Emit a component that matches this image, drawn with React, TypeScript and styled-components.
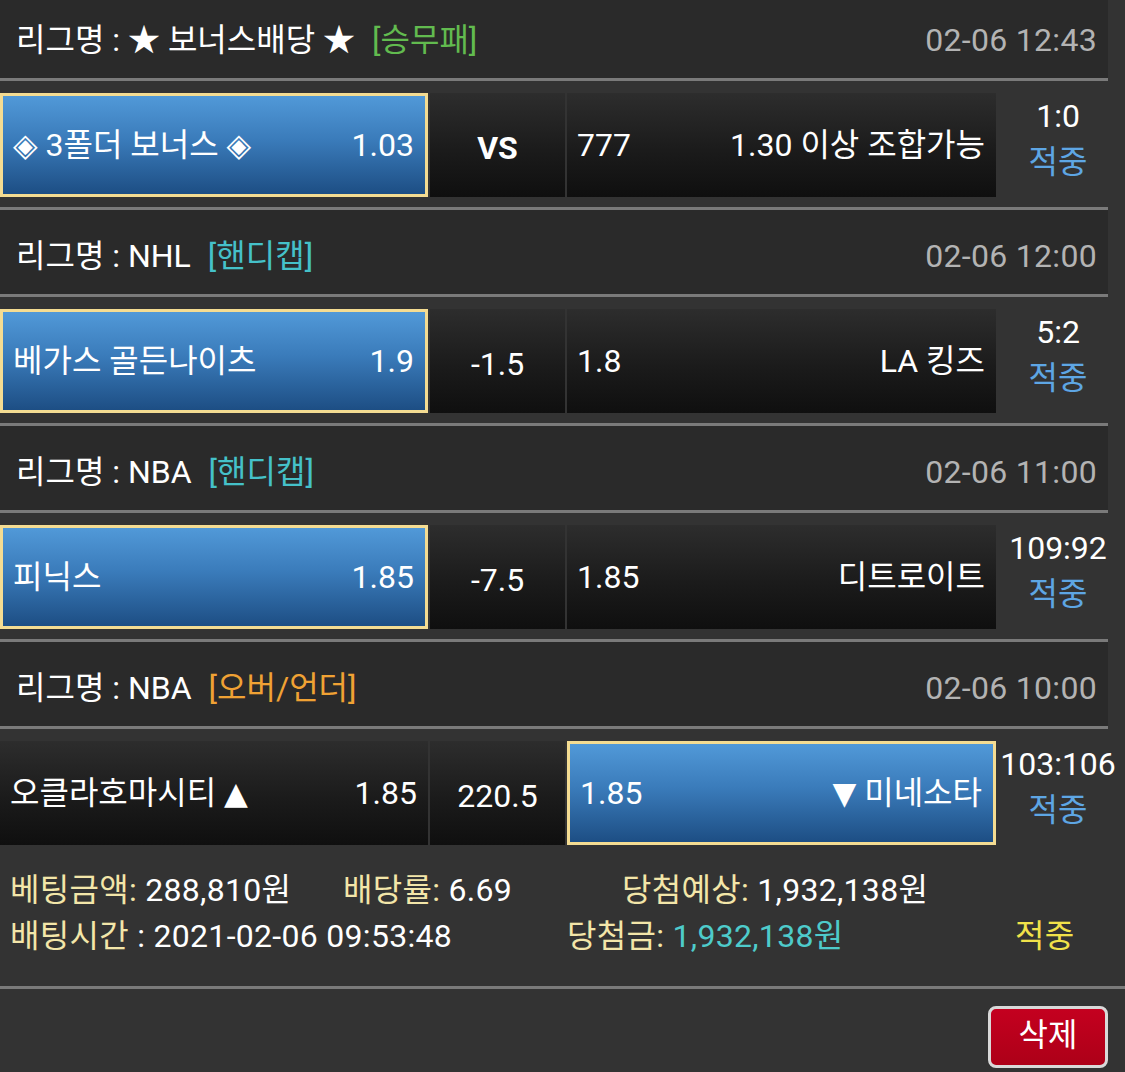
import React from "react";
import styled, { createGlobalStyle } from "styled-components";

const GlobalStyle = createGlobalStyle`
  * { box-sizing: border-box; }
  html, body {
    margin: 0;
    padding: 0;
    background: #333333;
  }
  body {
    font-family: Roboto, "Noto Sans CJK KR", "DejaVu Sans", sans-serif;
    color: #ffffff;
    font-size: 32px;
    overflow: hidden;
  }
`;

const Wrapper = styled.div`
  width: 1125px;
  margin-top: -9px;
`;

const LeagueHeader = styled.div`
  width: 1108px;
  height: 90px;
  padding: 8px 11px 0 16px;
  display: flex;
  align-items: center;
  justify-content: space-between;
  background: #2a2a2a;
  border-top: 3px solid #7a7a7a;
  border-bottom: 3px solid #7a7a7a;
  line-height: 40px;
`;

const LeagueName = styled.div`
  display: flex;
  align-items: center;
  white-space: nowrap;
`;

const Tag = styled.span<{ $color: string }>`
  margin-left: 17px;
  color: ${(p) => p.$color};
`;

const DateText = styled.span`
  color: #b3b3b3;
  letter-spacing: 0.3px;
`;

const MatchRow = styled.div`
  height: 126px;
  padding: 12px 0 10px;
  display: flex;
  gap: 2px;
`;

const Cell = styled.div<{ $selected?: boolean; $width: number }>`
  width: ${(p) => p.$width}px;
  flex-shrink: 0;
  height: 104px;
  padding: 0 11px 0 10px;
  display: flex;
  align-items: center;
  justify-content: space-between;
  white-space: nowrap;
  line-height: 40px;
  border: ${(p) => (p.$selected ? "3px solid #f4dc92" : "none")};
  background: ${(p) =>
    p.$selected
      ? "linear-gradient(to bottom, #5199d8 0%, #3a7bba 45%, #1d4e84 100%)"
      : "linear-gradient(to bottom, #2d2d2d 0%, #1b1b1b 55%, #0f0f0f 100%)"};
`;

const MidCell = styled(Cell)`
  justify-content: center;
  padding: 6px 0 0;
`;

const VsText = styled.span<{ $bold?: boolean }>`
  font-weight: ${(p) => (p.$bold ? 700 : 400)};
`;

const Arrow = styled.span`
  font-family: "DejaVu Sans", sans-serif;
  font-size: 31px;
`;

const ScoreCol = styled.div`
  width: 124px;
  flex-shrink: 0;
  margin-left: -2px;
  display: flex;
  flex-direction: column;
  align-items: center;
  line-height: 46px;
  white-space: nowrap;
`;

const Hit = styled.span`
  color: #5ea6e4;
`;

const Footer = styled.div`
  height: 134px;
  padding: 12px 0 0 10px;
  border-bottom: 3px solid #7a7a7a;
  line-height: 46px;
`;

const FooterLine = styled.div`
  display: flex;
  white-space: nowrap;
  letter-spacing: 0.3px;
`;

const FooterItem = styled.div<{ $width?: number }>`
  width: ${(p) => (p.$width ? `${p.$width}px` : "auto")};
  flex-shrink: 0;
`;

const Label = styled.span`
  color: #f3e6a9;
`;

const Money = styled.span`
  color: #4ecbcb;
`;

const Result = styled.span`
  color: #f1e24a;
`;

const ButtonBar = styled.div`
  display: flex;
  justify-content: flex-end;
  padding: 17px 17px 0 0;
`;

const DeleteButton = styled.button`
  width: 120px;
  height: 62px;
  border: 3px solid #d9d9d9;
  border-radius: 8px;
  background: linear-gradient(to bottom, #c4001f 0%, #ad0018 100%);
  color: #ffffff;
  font-family: inherit;
  font-size: 32px;
  line-height: 40px;
  padding: 0 0 4px;
`;

type Match = {
  league: string;
  type: string;
  typeColor: string;
  date: string;
  home: React.ReactNode;
  homeOdds: string;
  mid: string;
  awayOdds: string;
  away: React.ReactNode;
  score: string;
  pick: "home" | "away";
};

const matches: Match[] = [
  {
    league: "리그명 : ★ 보너스배당 ★",
    type: "[승무패]",
    typeColor: "#62bb4f",
    date: "02-06 12:43",
    home: "◈ 3폴더 보너스 ◈",
    homeOdds: "1.03",
    mid: "VS",
    awayOdds: "777",
    away: "1.30 이상 조합가능",
    score: "1:0",
    pick: "home",
  },
  {
    league: "리그명 : NHL",
    type: "[핸디캡]",
    typeColor: "#45c1c9",
    date: "02-06 12:00",
    home: "베가스 골든나이츠",
    homeOdds: "1.9",
    mid: "-1.5",
    awayOdds: "1.8",
    away: "LA 킹즈",
    score: "5:2",
    pick: "home",
  },
  {
    league: "리그명 : NBA",
    type: "[핸디캡]",
    typeColor: "#45c1c9",
    date: "02-06 11:00",
    home: "피닉스",
    homeOdds: "1.85",
    mid: "-7.5",
    awayOdds: "1.85",
    away: "디트로이트",
    score: "109:92",
    pick: "home",
  },
  {
    league: "리그명 : NBA",
    type: "[오버/언더]",
    typeColor: "#f0a234",
    date: "02-06 10:00",
    home: (
      <>
        오클라호마시티 <Arrow>▲</Arrow>
      </>
    ),
    homeOdds: "1.85",
    mid: "220.5",
    awayOdds: "1.85",
    away: (
      <>
        <Arrow>▼</Arrow> 미네소타
      </>
    ),
    score: "103:106",
    pick: "away",
  },
];

const MatchBlock = ({ m }: { m: Match }) => (
  <>
    <LeagueHeader>
      <LeagueName>
        {m.league}
        <Tag $color={m.typeColor}>{m.type}</Tag>
      </LeagueName>
      <DateText>{m.date}</DateText>
    </LeagueHeader>
    <MatchRow>
      <Cell $width={428} $selected={m.pick === "home"}>
        <span>{m.home}</span>
        <span>{m.homeOdds}</span>
      </Cell>
      <MidCell $width={135}>
        <VsText $bold={m.mid === "VS"}>{m.mid}</VsText>
      </MidCell>
      <Cell $width={429} $selected={m.pick === "away"}>
        <span>{m.awayOdds}</span>
        <span>{m.away}</span>
      </Cell>
      <ScoreCol>
        <span>{m.score}</span>
        <Hit>적중</Hit>
      </ScoreCol>
    </MatchRow>
  </>
);

export default function App() {
  return (
    <Wrapper>
      <GlobalStyle />
      {matches.map((m, i) => (
        <MatchBlock key={i} m={m} />
      ))}
      <Footer>
        <FooterLine>
          <FooterItem $width={333}>
            <Label>베팅금액:</Label> 288,810원
          </FooterItem>
          <FooterItem $width={279}>
            <Label>배당률:</Label> 6.69
          </FooterItem>
          <FooterItem>
            <Label>당첨예상:</Label> 1,932,138원
          </FooterItem>
        </FooterLine>
        <FooterLine>
          <FooterItem $width={557}>
            <Label>배팅시간</Label> : 2021-02-06 09:53:48
          </FooterItem>
          <FooterItem $width={448}>
            <Label>당첨금:</Label> <Money>1,932,138원</Money>
          </FooterItem>
          <FooterItem>
            <Result>적중</Result>
          </FooterItem>
        </FooterLine>
      </Footer>
      <ButtonBar>
        <DeleteButton>삭제</DeleteButton>
      </ButtonBar>
    </Wrapper>
  );
}
